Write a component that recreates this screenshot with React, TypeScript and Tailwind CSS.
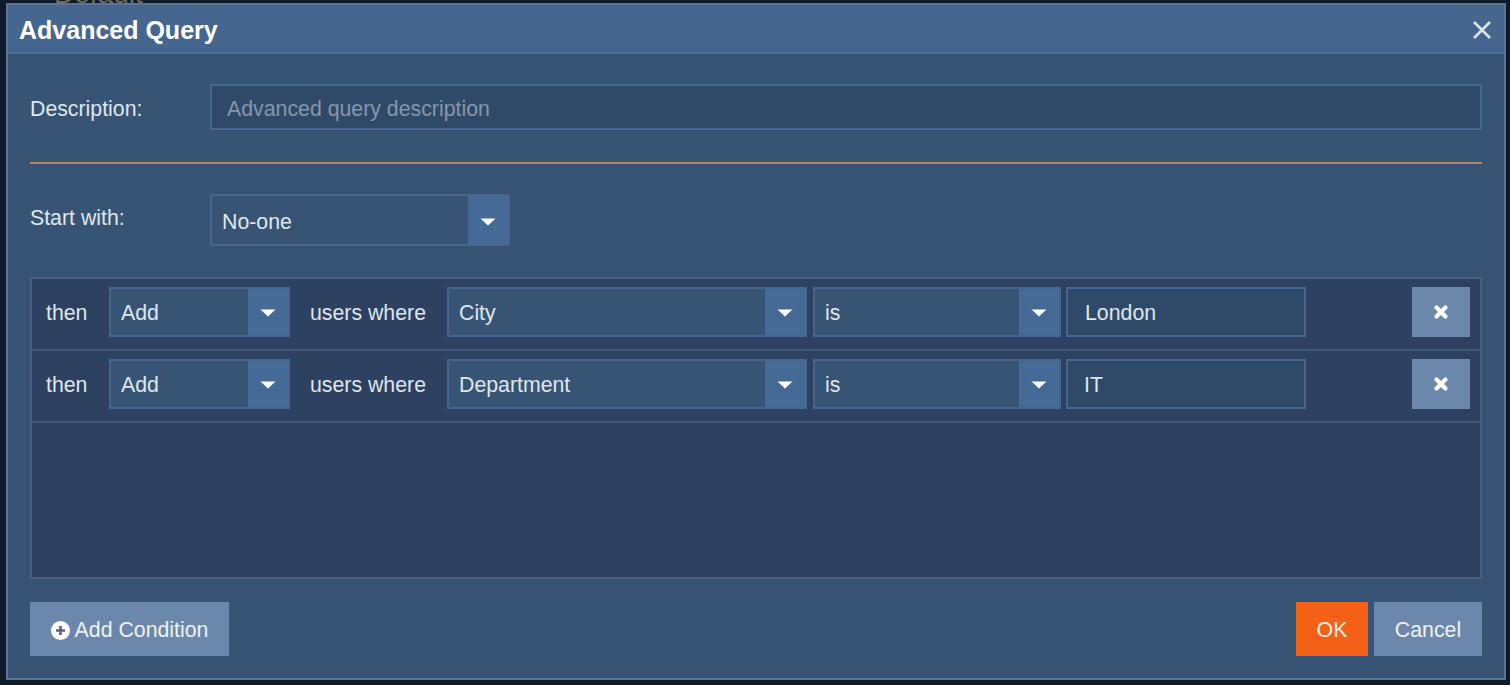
import React from "react";

function Caret() {
  return (
    <svg width="16" height="8" viewBox="0 0 16 8" className="block">
      <path d="M0.5 0.5h15L8 7.5z" fill="#ffffff" />
    </svg>
  );
}

function Select({ value, w, h = "h-[50px]", pt = "pt-[2px]" }: { value: string; w: string; h?: string; pt?: string }) {
  return (
    <div className={`flex ${w} ${h} shrink-0 border-2 border-[#44668f] bg-[#385474]`}>
      <div className={`flex-1 pl-[10px] flex items-center text-[#dfe6ee] ${pt}`}>{value}</div>
      <div className={`w-[40px] bg-[#466a96] flex items-center justify-center ${pt}`}>
        <Caret />
      </div>
    </div>
  );
}

function XIcon() {
  return (
    <svg width="16" height="16" viewBox="0 0 16 16" className="block">
      <path d="M3.5 3.5l9 9M12.5 3.5l-9 9" stroke="#ffffff" strokeWidth="4.2" strokeLinecap="round" />
    </svg>
  );
}

function Row({ field, value, valueIndent }: { field: string; value: string; valueIndent: string }) {
  return (
    <div className="flex items-center h-[72px] border-b-2 border-[#3f5675] pl-[14px] pr-[10px] pb-[4px]">
      <span className="w-[63px] shrink-0 pt-[2px] text-[#dfe6ee]">then</span>
      <Select value="Add" w="w-[181px]" />
      <span className="w-[157px] shrink-0 pl-[20px] pt-[2px] text-[#dfe6ee]">users where</span>
      <Select value={field} w="w-[360px]" />
      <div className="w-[6px] shrink-0" />
      <Select value="is" w="w-[248px]" />
      <div className="w-[5px] shrink-0" />
      <div className={`w-[240px] h-[50px] shrink-0 border-2 border-[#44668f] bg-[#2f4a68] flex items-center pt-[2px] ${valueIndent} text-[#dfe6ee]`}>
        {value}
      </div>
      <div className="flex-1" />
      <div className="w-[58px] h-[50px] bg-[#6b88ac] flex items-center justify-center">
        <XIcon />
      </div>
    </div>
  );
}

export default function App() {
  return (
    <div className="w-[1510px] h-[685px] overflow-hidden bg-[#0f1b2a] font-['Liberation_Sans',Arial,sans-serif] text-[21.3px] leading-[25px]">
      <div className="h-[3px] overflow-hidden pl-[54px] text-[#6e6a5c] text-[28px] leading-none">
        <div className="-mt-[20px]">Default</div>
      </div>
      <div className="ml-[6px] w-[1500px] h-[677px] border-2 border-[#5a7596] bg-[#385474] flex flex-col">
        <div className="h-[49px] shrink-0 bg-[#44668f] border-b-2 border-[#4c6e98] flex items-center justify-between pl-[11px] pr-[14px] pt-[3px]">
          <span className="text-[25px] leading-[30px] font-bold text-white">Advanced Query</span>
          <svg width="20" height="20" viewBox="0 0 20 20" className="block -mr-[2px]">
            <path d="M2 2l16 16M18 2L2 18" stroke="#dbe2ea" strokeWidth="2.6" />
          </svg>
        </div>
        <div className="flex-1 flex flex-col px-[22px]">
          <div className="flex items-center mt-[30px] h-[46px]">
            <span className="w-[180px] shrink-0 pt-[4px] text-[#dfe6ee]">Description:</span>
            <div className="flex-1 h-[46px] border-2 border-[#44668f] bg-[#2f4a68] flex items-center pl-[15px] pt-[4px] text-[#8696aa]">
              Advanced query description
            </div>
          </div>
          <div className="h-[2px] mt-[32px] bg-[#b5846f]" />
          <div className="flex items-center mt-[30px]">
            <span className="w-[180px] shrink-0 text-[#dfe6ee] -mt-[4px]">Start with:</span>
            <Select value="No-one" w="w-[300px]" h="h-[52px]" pt="pt-[4px]" />
          </div>
          <div className="mt-[31px] h-[302px] border-2 border-[#48607e] bg-[#2e4160] flex flex-col">
            <Row field="City" value="London" valueIndent="pl-[17px]" />
            <Row field="Department" value="IT" valueIndent="pl-[16px]" />
          </div>
          <div className="flex mt-[23px] h-[54px]">
            <div className="w-[199px] bg-[#6b88ac] flex items-center justify-center gap-[5px] pt-[2px] text-[#eef2f7]">
              <svg width="19" height="19" viewBox="0 0 19 19" className="block">
                <circle cx="9.5" cy="9.5" r="9.5" fill="#ffffff" />
                <path d="M9.5 5v9M5 9.5h9" stroke="#4f6690" strokeWidth="2.6" />
              </svg>
              <span>Add Condition</span>
            </div>
            <div className="flex-1" />
            <div className="w-[72px] bg-[#f46016] flex items-center justify-center pt-[2px] text-[#fff1e8]">OK</div>
            <div className="w-[108px] ml-[6px] bg-[#6b88ac] flex items-center justify-center pt-[2px] text-[#eef2f7]">Cancel</div>
          </div>
        </div>
      </div>
    </div>
  );
}
